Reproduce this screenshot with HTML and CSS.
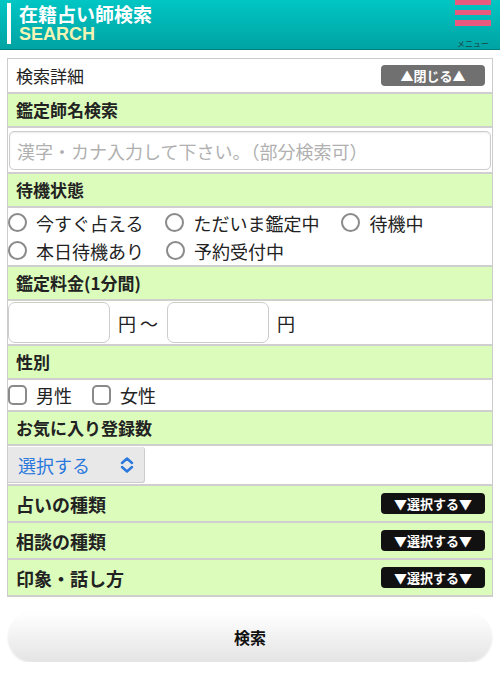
FILE: index.html
```html
<!DOCTYPE html>
<html lang="ja">
<head>
    <meta charset="UTF-8">
    <meta name="viewport" content="width=device-width, initial-scale=1.0">
    <title>在籍占い師検索</title>
    <link rel="stylesheet" href="styles.css">
</head>
<body>
    <!-- ヘッダー -->
    <header class="site-header">
        <div class="header-title">
            <h1>在籍占い師検索</h1>
            <p class="header-sub">SEARCH</p>
        </div>
        <div class="menu-btn">
            <span class="menu-bar"></span>
            <span class="menu-bar"></span>
            <span class="menu-bar"></span>
            <span class="menu-label">メニュー</span>
        </div>
    </header>

    <!-- 検索フォーム -->
    <form class="search-panel" action="/search" method="get">
        <div class="row row-top">
            <span>検索詳細</span>
            <button type="button" class="btn-toggle btn-close">▲閉じる▲</button>
        </div>

        <div class="row section-head">鑑定師名検索</div>
        <div class="row row-name">
            <input type="text" class="name-input" placeholder="漢字・カナ入力して下さい。（部分検索可）">
        </div>

        <div class="row section-head">待機状態</div>
        <div class="row row-options">
            <label class="opt"><input type="radio" name="status"> 今すぐ占える</label>
            <label class="opt"><input type="radio" name="status"> ただいま鑑定中</label>
            <label class="opt"><input type="radio" name="status"> 待機中</label>
            <label class="opt"><input type="radio" name="status"> 本日待機あり</label>
            <label class="opt"><input type="radio" name="status"> 予約受付中</label>
        </div>

        <div class="row section-head">鑑定料金(1分間)</div>
        <div class="row row-price">
            <input type="text" class="price-input">
            <span class="unit">円 〜</span>
            <input type="text" class="price-input">
            <span class="unit">円</span>
        </div>

        <div class="row section-head">性別</div>
        <div class="row row-gender">
            <label class="opt"><input type="checkbox" name="sex"> 男性</label>
            <label class="opt"><input type="checkbox" name="sex"> 女性</label>
        </div>

        <div class="row section-head">お気に入り登録数</div>
        <div class="row row-select">
            <div class="fake-select">
                <span>選択する</span>
                <svg width="14" height="16" viewBox="0 0 14 16"><path d="M2 6 L7 1.5 L12 6 M2 10 L7 14.5 L12 10" fill="none" stroke="#2a78dc" stroke-width="2.4" stroke-linecap="round" stroke-linejoin="round"/></svg>
            </div>
        </div>

        <div class="row section-head section-toggle">
            <span>占いの種類</span>
            <button type="button" class="btn-toggle btn-open">▼選択する▼</button>
        </div>
        <div class="row section-head section-toggle">
            <span>相談の種類</span>
            <button type="button" class="btn-toggle btn-open">▼選択する▼</button>
        </div>
        <div class="row section-head section-toggle">
            <span>印象・話し方</span>
            <button type="button" class="btn-toggle btn-open">▼選択する▼</button>
        </div>
    </form>

    <div class="submit-wrap">
        <button type="submit" class="btn-search">検索</button>
    </div>
</body>
</html>
```

FILE: styles.css
```css
body {
    margin: 0;
    font-family: "Noto Sans CJK JP", "Noto Sans", sans-serif;
    background-color: #ffffff;
    color: #222;
}
.site-header {
    height: 49px;
    background: linear-gradient(#00c6c4, #00a3a3);
    border-bottom: 1px solid #00807f;
    display: flex;
    justify-content: space-between;
}
.header-title {
    margin: 3px 0 0 7px;
    padding-left: 8px;
    border-left: 4px solid #ffffff;
    height: 41px;
}
.header-title h1 {
    margin: 0;
    font-size: 19px;
    line-height: 22px;
    color: #ffffff;
    font-weight: bold;
}
.header-sub {
    margin: 0;
    font-family: "Liberation Sans", Arial, sans-serif;
    font-size: 18px;
    line-height: 19px;
    font-weight: bold;
    color: #f3f3b4;
}
.menu-btn {
    width: 36px;
    margin-right: 9px;
    display: flex;
    flex-direction: column;
    align-items: center;
}
.menu-bar {
    display: block;
    width: 36px;
    height: 6px;
    background-color: #ea5a7e;
    margin-bottom: 5px;
}
.menu-bar:first-child {
    height: 5px;
}
.menu-label {
    font-size: 8px;
    line-height: 10px;
    color: #1d4444;
    margin-top: 8px;
    white-space: nowrap;
}

.search-panel {
    margin: 8px 7px 0 7px;
    border: 1px solid #cccccc;
    border-bottom: none;
}
.row {
    border-bottom: 2px solid #cfcfcf;
    box-sizing: border-box;
}
.row-top {
    height: 35px;
    display: flex;
    justify-content: space-between;
    align-items: center;
    padding: 0 7px 0 8px;
    font-size: 17px;
}
.section-head {
    height: 34px;
    background-color: #dcfcbc;
    font-weight: bold;
    font-size: 17px;
    line-height: 32px;
    padding-left: 8px;
}
.section-toggle {
    height: 37px;
    display: flex;
    justify-content: space-between;
    align-items: center;
    padding-right: 7px;
    font-size: 18px;
}
.btn-toggle {
    width: 104px;
    height: 21px;
    border: none;
    border-radius: 4px;
    color: #ffffff;
    font-family: "Noto Sans CJK JP", sans-serif;
    font-weight: bold;
    font-size: 13px;
    padding: 0;
    line-height: 21px;
}
.btn-close {
    background-color: #707070;
}
.btn-open {
    background-color: #111111;
}

.row-name {
    height: 46px;
    padding: 3px 1px 3px 1px;
}
.name-input {
    width: 100%;
    height: 39px;
    box-sizing: border-box;
    border: 1px solid #cccccc;
    border-radius: 5px;
    box-shadow: inset 0 1px 2px rgba(0, 0, 0, 0.08);
    font-size: 18px;
    padding: 0 7px;
    font-family: "Noto Sans CJK JP", sans-serif;
}
.name-input::placeholder {
    color: #b0b0b0;
}

.row-options {
    height: 59px;
    display: flex;
    flex-wrap: wrap;
    column-gap: 22px;
    align-content: center;
    font-size: 18px;
    line-height: 28px;
}
.opt {
    display: flex;
    align-items: center;
    gap: 9px;
    color: #222;
}
.opt input {
    appearance: none;
    -webkit-appearance: none;
    margin: 0;
    width: 19px;
    height: 19px;
    border: 2px solid #8a8a8a;
    border-radius: 50%;
    box-sizing: border-box;
    background-color: #ffffff;
}
.opt input[type="checkbox"] {
    border-radius: 5px;
    width: 19px;
    height: 20px;
}

.row-price {
    height: 45px;
    display: flex;
    align-items: center;
    font-size: 18px;
}
.price-input {
    width: 102px;
    height: 41px;
    box-sizing: border-box;
    border: 1px solid #cccccc;
    border-radius: 7px;
    margin: 0;
}
.unit {
    width: 57px;
    padding-left: 8px;
    box-sizing: border-box;
}

.row-gender {
    height: 32px;
    display: flex;
    align-items: center;
    gap: 20px;
    font-size: 18px;
}

.row-select {
    height: 40px;
    padding-top: 1px;
}
.fake-select {
    width: 137px;
    height: 36px;
    box-sizing: border-box;
    background-color: #e8e8e8;
    border-right: 1px solid #cccccc;
    border-bottom: 1px solid #cccccc;
    border-radius: 0 3px 3px 0;
    display: flex;
    align-items: center;
    justify-content: space-between;
    padding: 0 10px 0 10px;
    color: #2a78dc;
    font-size: 18px;
}

.submit-wrap {
    padding: 15px 8px 0 8px;
}
.btn-search {
    width: 100%;
    height: 50px;
    border: none;
    border-radius: 25px;
    background: linear-gradient(#ffffff, #e4e4e4);
    box-shadow: 0 1px 2px rgba(0, 0, 0, 0.12);
    font-family: "Noto Sans CJK JP", sans-serif;
    font-weight: bold;
    font-size: 16px;
    color: #111;
    cursor: pointer;
}
```
